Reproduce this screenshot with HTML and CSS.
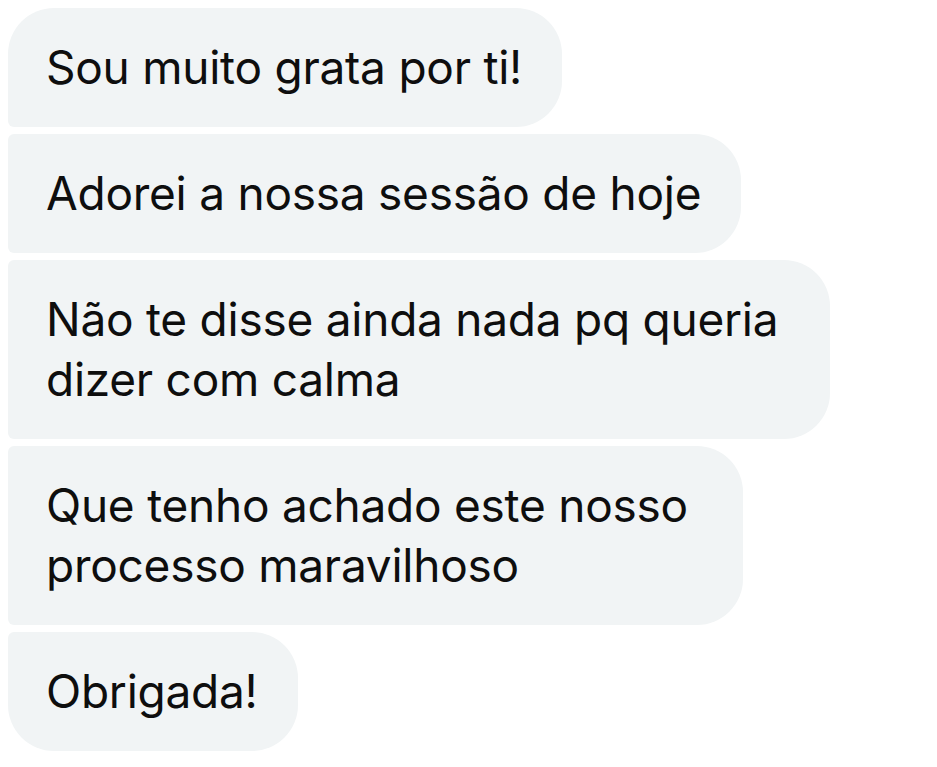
FILE: index.html
```html
<!DOCTYPE html>
<html>
<head>
  <title>Mensagens</title>
  <link rel="stylesheet" href="styles.css">
</head>
<body>
  <div class="thread">
    <div class="bubble first">Sou muito grata por ti!</div>
    <div class="bubble">Adorei a nossa sessão de hoje</div>
    <div class="bubble wide">Não te disse ainda nada pq queria dizer com calma</div>
    <div class="bubble mid">Que tenho achado este nosso processo maravilhoso</div>
    <div class="bubble last">Obrigada!</div>
  </div>
</body>
</html>
```

FILE: styles.css
```css
body {
  margin: 0;
  padding: 8px;
  background-color: #fff;
  font-family: Inter, "Noto Sans", sans-serif;
}

.thread {
  display: flex;
  flex-direction: column;
  align-items: flex-start;
  gap: 7px;
}

.bubble {
  background-color: #f1f4f5;
  color: #0e0e0e;
  font-size: 46px;
  letter-spacing: -0.25px;
  line-height: 60px;
  padding: 29px 40px 30px 38px;
  border-radius: 6px 46px 46px 6px;
}

.first {
  border-top-left-radius: 46px;
}

.last {
  border-bottom-left-radius: 46px;
}

.wide {
  width: 744px;
}

.mid {
  width: 657px;
}
```
